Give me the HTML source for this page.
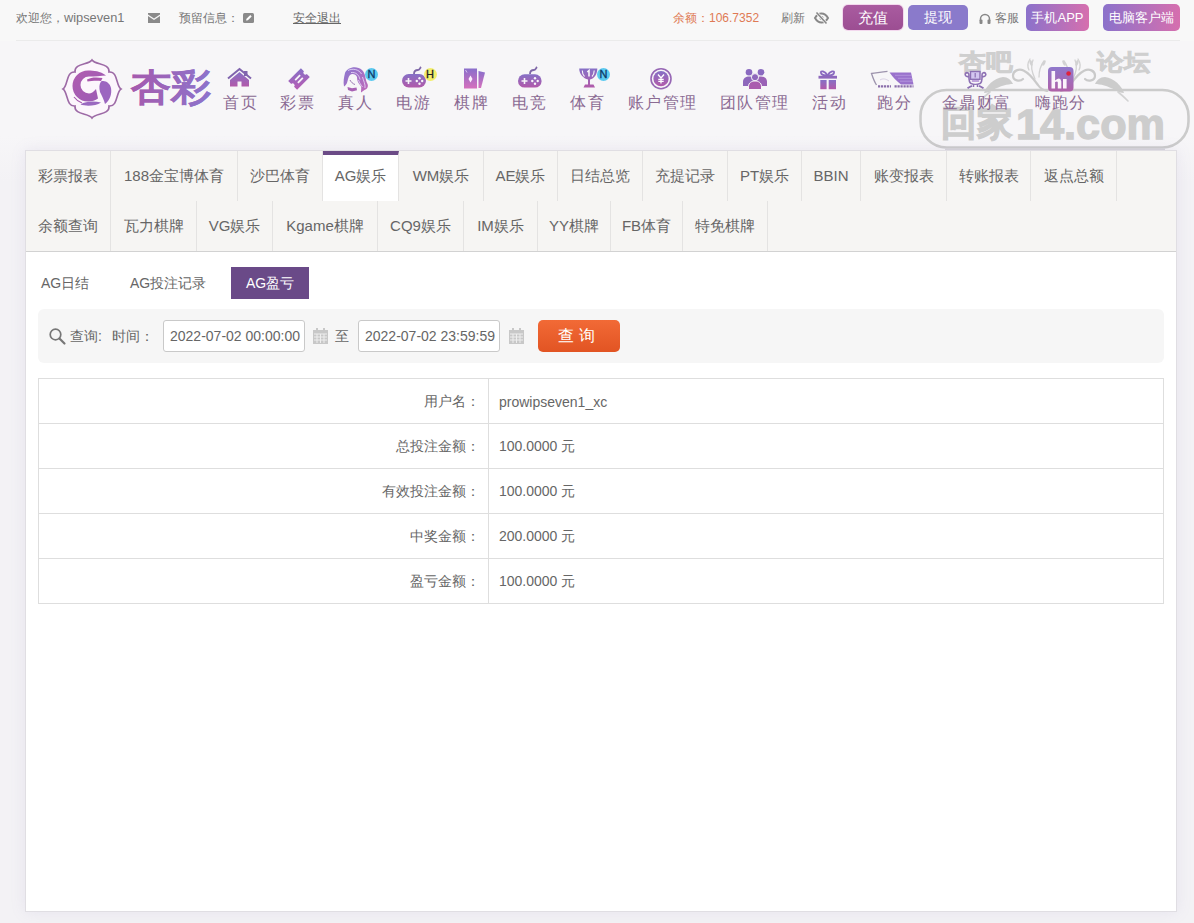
<!DOCTYPE html>
<html><head><meta charset="utf-8">
<style>
*{margin:0;padding:0;box-sizing:border-box}
html,body{width:1194px;height:923px;overflow:hidden}
body{font-family:"Liberation Sans",sans-serif;background:#f3f2f5;position:relative;color:#555}
.abs{position:absolute}
svg{position:absolute;overflow:visible}
.topbar{position:absolute;left:0;top:0;width:1194px;height:41px;background:#f8f8f8}
.topline{position:absolute;left:16px;top:40px;width:1164px;height:1px;background:#ebebeb}
.t12{position:absolute;font-size:12px;line-height:14px;white-space:nowrap;top:11px}
.btn{position:absolute;top:5px;height:25px;border-radius:5px;color:#fff;font-size:14px;line-height:25px;text-align:center;white-space:nowrap}
.nav{position:absolute;top:41px;left:0;width:1194px;height:140px;background:linear-gradient(#f7f6f8 0,#f7f6f8 95px,#f3f2f5 140px)}
.nt{position:absolute;top:93px;z-index:3;width:120px;margin-left:-60px;text-align:center;font-size:16px;letter-spacing:1.2px;padding-left:1.2px;line-height:20px;color:#8b6a93;white-space:nowrap}
.panel{position:absolute;left:25px;top:150px;width:1152px;height:762px;background:#fff;border:1px solid #e0dee3;box-shadow:0 0 14px rgba(150,130,190,.13)}
.tabs{position:absolute;left:0;top:0;width:1150px;height:101px;background:#f6f5f3;border-bottom:1px solid #d2d2d2}
.tab{position:absolute;height:50px;font-size:15px;line-height:50px;color:#666;white-space:nowrap;border-right:1px solid #e4e3e2;text-align:center}
.r1{top:0}.r2{top:50px}
.sub{position:absolute;top:116px;height:32px;font-size:14px;line-height:32px;color:#666;text-align:center;white-space:nowrap}
.query{position:absolute;left:12px;top:158px;width:1126px;height:54px;background:#f6f6f6;border-radius:6px}
.inp{position:absolute;top:11px;height:32px;width:142px;border:1px solid #c9c9c9;background:#fff;border-radius:3px;font-size:14px;line-height:30px;padding-left:6px;color:#666;white-space:nowrap;overflow:hidden}
table{position:absolute;left:12px;top:227px;width:1126px;border-collapse:collapse}
td{border:1px solid #dedede;height:45px;font-size:14px;color:#666;padding-top:2px;white-space:nowrap}
td.l{width:450px;text-align:right;padding-right:8px}
td.r{padding-left:10px}
.badge{position:absolute;z-index:3;width:13px;height:13px;border-radius:50%;font-size:11px;line-height:13px;text-align:center;font-weight:normal;-webkit-text-stroke:0.3px currentColor}
.wm{position:absolute;color:rgba(150,150,150,.45);font-weight:bold;white-space:nowrap}
</style></head><body>
<div class="topbar"></div>
<div class="topline"></div>
<div class="t12" style="left:16px;color:#777">欢迎您，<span style="font-size:12.8px">wipseven1</span></div>
<svg style="left:148px;top:13px" width="12" height="10" viewBox="0 0 12 10"><path d="M0 0H12V1.5L6 5.5L0 1.5Z M0 3L6 7L12 3V10H0Z" fill="#8a8a8a"/></svg>
<div class="t12" style="left:179px;color:#777">预留信息：</div>
<svg style="left:243px;top:13px" width="11" height="10" viewBox="0 0 11 10"><rect width="11" height="10" rx="1.5" fill="#8a8a8a"/><path d="M3 7.5L3.5 5.8L7.3 2L8.7 3.4L4.9 7.2Z" fill="#fff"/></svg>
<div class="t12" style="left:293px;color:#666;text-decoration:underline">安全退出</div>
<div class="t12" style="left:673px;color:#df7a55">余额：106.7352</div>
<div class="t12" style="left:781px;color:#777">刷新</div>
<svg style="left:814px;top:12px" width="15" height="12" viewBox="0 0 15 12"><path d="M1 6C3 2.5 5.5 1.5 7.5 1.5S12 2.5 14 6C12 9.5 9.5 10.5 7.5 10.5S3 9.5 1 6Z" fill="none" stroke="#888" stroke-width="2"/><circle cx="7.5" cy="6" r="2" fill="#888"/><path d="M2.5 0.5L12.5 11.5" stroke="#f8f8f8" stroke-width="3"/><path d="M2.5 0.5L12.5 11.5" stroke="#888" stroke-width="1.6"/></svg>
<div class="btn" style="left:843px;width:60px;background:linear-gradient(#a95ba0,#9c4e92);box-shadow:0 0 0 1px #f3d8ee;font-size:15px">充值</div>
<div class="btn" style="left:908px;width:60px;background:#8a7acb">提现</div>
<svg style="left:979px;top:13px" width="12" height="11" viewBox="0 0 12 11"><path d="M1.5 8V6A4.5 4.5 0 0 1 10.5 6V8" fill="none" stroke="#888" stroke-width="1.5"/><rect x="0.5" y="6.5" width="3" height="4.5" rx="1" fill="#888"/><rect x="8.5" y="6.5" width="3" height="4.5" rx="1" fill="#888"/></svg>
<div class="t12" style="left:995px;color:#777">客服</div>
<div class="btn" style="left:1026px;top:4px;height:27px;line-height:27px;width:63px;font-size:13px;background:linear-gradient(90deg,#8b72cb,#d66fae)">手机APP</div>
<div class="btn" style="left:1103px;top:4px;height:27px;line-height:27px;width:77px;font-size:13px;background:linear-gradient(90deg,#8b72cb,#d66fae)">电脑客户端</div>

<div class="nav"></div>
<svg style="left:0;top:0;z-index:0" width="1194" height="160" viewBox="0 0 1194 160">
<g opacity="0.9">
<text x="959" y="70" font-size="23" font-weight="bold" fill="#cbcbcb" stroke="#cbcbcb" stroke-width="0.8" style="font-family:'Liberation Sans',sans-serif" textLength="53" lengthAdjust="spacingAndGlyphs">杏吧</text>
<text x="1097" y="70" font-size="23" font-weight="bold" fill="#cbcbcb" stroke="#cbcbcb" stroke-width="0.8" style="font-family:'Liberation Sans',sans-serif" textLength="53" lengthAdjust="spacingAndGlyphs">论坛</text>
<g>
<path d="M984 93C986 86 994 78 1003 77C1008 77 1011 80 1013 84C1008 84 1000 86 993 90C990 92 987 93 984 93Z" fill="#c8c8c8"/>
<path d="M990 92C986 95 983 98 980 101" fill="none" stroke="#cfcfcf" stroke-width="1.6" stroke-linecap="round"/>
<path d="M1023 79C1020 82 1013 81 1013 75.5C1013 70.5 1019 68.5 1023.5 70.5C1029 73 1033 78 1038 85C1040 88 1043 90 1047 91" fill="none" stroke="#c6c6c6" stroke-width="2.2" stroke-linecap="round"/>
<path d="M1035 79C1032 72 1030 66 1033 60M1039 77C1039 70 1041 65 1044 61M1029 70C1027 66 1028 62 1030 59" fill="none" stroke="#cfcfcf" stroke-width="1.3" stroke-linecap="round"/>
<ellipse cx="1031" cy="63" rx="1.4" ry="3" fill="#cfcfcf" transform="rotate(-20 1031 63)"/>
<ellipse cx="1044" cy="63" rx="1.3" ry="3" fill="#cfcfcf" transform="rotate(25 1044 63)"/>
</g>
<g transform="translate(2108,0) scale(-1,1)">
<path d="M984 93C986 86 994 78 1003 77C1008 77 1011 80 1013 84C1008 84 1000 86 993 90C990 92 987 93 984 93Z" fill="#c8c8c8"/>
<path d="M990 92C986 95 983 98 980 101" fill="none" stroke="#cfcfcf" stroke-width="1.6" stroke-linecap="round"/>
<path d="M1023 79C1020 82 1013 81 1013 75.5C1013 70.5 1019 68.5 1023.5 70.5C1029 73 1033 78 1038 85C1040 88 1043 90 1047 91" fill="none" stroke="#c6c6c6" stroke-width="2.2" stroke-linecap="round"/>
<path d="M1035 79C1032 72 1030 66 1033 60M1039 77C1039 70 1041 65 1044 61M1029 70C1027 66 1028 62 1030 59" fill="none" stroke="#cfcfcf" stroke-width="1.3" stroke-linecap="round"/>
<ellipse cx="1031" cy="63" rx="1.4" ry="3" fill="#cfcfcf" transform="rotate(-20 1031 63)"/>
<ellipse cx="1044" cy="63" rx="1.3" ry="3" fill="#cfcfcf" transform="rotate(25 1044 63)"/>
</g>
</g>
<rect x="920.5" y="90" width="268" height="57.5" rx="26" fill="none" stroke="#cbcbcb" stroke-width="2.6"/>
<path d="M945 149.2H1165" stroke="#d6d4da" stroke-width="1.5"/>
<text y="138.5" font-weight="bold" fill="#cdcdcd" stroke="#cdcdcd" stroke-width="1.3" style="font-family:'Liberation Sans',sans-serif"><tspan x="941" y="135" font-size="35" textLength="71" lengthAdjust="spacingAndGlyphs">回家</tspan><tspan x="1016" y="138.5" font-size="42" textLength="149" lengthAdjust="spacingAndGlyphs">14.com</tspan></text>
</svg>
<svg style="left:0;top:0" width="1194" height="150" viewBox="0 0 1194 150"><defs>
<linearGradient id="gp" x1="0" y1="0" x2="0" y2="1"><stop offset="0" stop-color="#8670c6"/><stop offset="1" stop-color="#b25aaa"/></linearGradient>
<linearGradient id="gpd" x1="1" y1="0" x2="0" y2="1"><stop offset="0" stop-color="#8670c6"/><stop offset="1" stop-color="#b85cb4"/></linearGradient>
<linearGradient id="gcard" x1="0" y1="0" x2="0" y2="1"><stop offset="0" stop-color="#8a6fcb"/><stop offset="1" stop-color="#d570bd"/></linearGradient>
<linearGradient id="glogo" x1="0" y1="0" x2="1" y2="0"><stop offset="0" stop-color="#a65aad"/><stop offset="1" stop-color="#8c74cc"/></linearGradient>
<linearGradient id="gem" x1="0" y1="0" x2="1" y2="1"><stop offset="0" stop-color="#b15cb0"/><stop offset="1" stop-color="#9a5cb5"/></linearGradient>
<linearGradient id="ghi" x1="0" y1="0" x2="0" y2="1"><stop offset="0" stop-color="#8f78cc"/><stop offset="1" stop-color="#b060a8"/></linearGradient>
</defs>
<!-- logo emblem -->
<g transform="translate(92,89)">
<path d="M0 -29 C-3 -24 -18 -26 -17 -17 C-26 -18 -24 -3 -29 0 C-24 3 -26 18 -17 17 C-18 26 -3 24 0 29 C3 24 18 26 17 17 C26 18 24 3 29 0 C24 -3 26 -18 17 -17 C18 -26 3 -24 0 -29Z" fill="#fcf6fc" stroke="#9d6aa6" stroke-width="1.6"/>
</g>
<path d="M106 75.5C100 71 94 70.5 88 70.5A15.5 15.5 0 0 0 88 101.5C92 101.5 95.5 100.5 98 98.5L96 89C93.5 92 91 93.5 89 93.5A8.5 8.5 0 0 1 89 76.5C95 76.5 101 76 106 75.5Z" fill="url(#gem)"/>
<path d="M74 97A17.5 17.5 0 0 0 82 103" fill="none" stroke="#a65aae" stroke-width="1.2"/>
<path d="M87 79.5C91 77 97 77 102.5 78L101 81C96 80.5 91 81 87.5 81.5Z" fill="#a957ad"/>
<path d="M101 81.5C105 80 110 83 111 88C112 94 110 100 105 104C104 100 102 96 100 92C99 88 99 84 101 81.5Z" fill="#9c66c0"/>
<path d="M80.5 104.5C86 101 94 101 101 102.5C96 106 86 106.5 80.5 104.5Z" fill="#9a68c0"/>
<text x="131" y="99.5" font-size="37" font-weight="bold" fill="url(#glogo)" stroke="url(#glogo)" stroke-width="0.3" style="font-family:'Liberation Sans',sans-serif" textLength="80" lengthAdjust="spacingAndGlyphs">杏彩</text>
<!-- house -->
<path d="M228 78.5L239.5 69L251 78.5" fill="none" stroke="#8064ae" stroke-width="2"/>
<rect x="244" y="71" width="3.5" height="5" fill="#8064ae"/>
<path d="M230 80L239.5 72L249 80V86.5H241.5V81.5H237.5V86.5H230Z" fill="url(#gp)"/>
<!-- ticket -->
<g transform="translate(299,79) rotate(-45)">
<path d="M-9 -6.3H9V-2A2 2 0 0 0 9 2V6.3H-9V2A2 2 0 0 0 -9 -2Z" fill="url(#gpd)"/>
<rect x="-3.5" y="-2.8" width="7" height="1.8" fill="#f7f6f8"/><rect x="-3.5" y="1" width="7" height="1.8" fill="#f7f6f8"/>
</g>
<!-- woman -->
<linearGradient id="gw" x1="0" y1="0" x2="1" y2="1"><stop offset="0" stop-color="#8a78d0"/><stop offset="1" stop-color="#c068b8"/></linearGradient>
<path d="M345 73C347 67 357 65 362 70C366 74 365 79 367 83C369 86 367.5 89 364.5 90L361 92.5C361 89 362 87 360 85C358 83 357 80 357 77C356 74 352 73 350 75C348 77 348 80 347 83C346 85 345 86 344 86.5C343 82 344 77 345 73Z" fill="url(#gw)"/>
<path d="M348 70.5C353 68 359 69.5 361.5 74M351 72.5C356 72 359 75 360 79.5M362.5 77C363.5 81 365.5 84 365 88M358.5 80C359.5 83 361 85 362.5 87" fill="none" stroke="#e2d2f6" stroke-width="0.9"/>
<path d="M350 80C351 82 353 84 355 84.5" fill="none" stroke="#8e6aa8" stroke-width="0.9"/>
<path d="M347.5 87L352 88.3L356.5 87.5L357 90.2L352 91.5L348 90Z" fill="#a862b4"/>
<!-- gamepad 1 -->
<path d="M414 74C414 71 416 70 418 70C420 70 420 68 421 67" fill="none" stroke="#7f68a8" stroke-width="1.8"/>
<rect x="402" y="74" width="24" height="13.5" rx="6.75" fill="url(#gp)"/>
<path d="M405.5 81H411.5M408.5 78V84" stroke="#f7f6f8" stroke-width="1.6"/>
<circle cx="419.5" cy="78.3" r="1.2" fill="#f7f6f8"/><circle cx="419.5" cy="83.7" r="1.2" fill="#f7f6f8"/><circle cx="416.8" cy="81" r="1.2" fill="#f7f6f8"/><circle cx="422.2" cy="81" r="1.2" fill="#f7f6f8"/>
<!-- cards -->
<path d="M478.5 71L485 72.5L481 88H478.5Z" fill="url(#gcard)"/>
<rect x="464" y="68.5" width="13" height="20" fill="url(#gcard)"/>
<path d="M470.5 75.5L472.5 79L470.5 82.5L468.5 79Z" fill="#fbeefc"/>
<path d="M465.5 70L467 72.5" stroke="#e8d8f5" stroke-width="0.8"/>
<!-- gamepad 2 -->
<path d="M530 74C530 71 532 70 534 70C536 70 536 68 537 67" fill="none" stroke="#7f68a8" stroke-width="1.8"/>
<rect x="518" y="74.3" width="23.6" height="13.3" rx="6.6" fill="url(#gp)"/>
<path d="M521.5 81H527.5M524.5 78V84" stroke="#f7f6f8" stroke-width="1.6"/>
<circle cx="535" cy="78.3" r="1.2" fill="#f7f6f8"/><circle cx="535" cy="83.7" r="1.2" fill="#f7f6f8"/><circle cx="532.3" cy="81" r="1.2" fill="#f7f6f8"/><circle cx="537.7" cy="81" r="1.2" fill="#f7f6f8"/>
<!-- trophy -->
<path d="M579.2 68.5H597.3C597.3 74 594.5 78.5 590 79.5V84.5H593.5L595 87.5H583.5L585 84.5H588V79.5C583.5 78.5 579.2 74 579.2 68.5Z" fill="url(#gp)"/>
<path d="M582.3 70.5C582.3 73 583 75 584.5 76.5M594.2 70.5C594.2 73 593.5 75 592 76.5" stroke="#f7f6f8" stroke-width="1.1" fill="none"/>
<path d="M587.3 72L589 70.5V76.5" stroke="#f7f6f8" stroke-width="1.6" fill="none"/>
<!-- coin -->
<circle cx="661" cy="78.7" r="10" fill="none" stroke="#9767b5" stroke-width="1.6"/>
<circle cx="661" cy="78.7" r="7.6" fill="url(#gp)"/>
<path d="M658 74.5L661 78L664 74.5M661 78V83.5M658.3 79.3H663.7M658.3 81.3H663.7" stroke="#fff" stroke-width="1.3" fill="none"/>
<!-- team -->
<circle cx="749" cy="72.2" r="3.3" fill="#8a6ac0"/><circle cx="761" cy="72.2" r="3.3" fill="#8a6ac0"/>
<path d="M743 86V82C743 78 746 76.5 749 76.5C752 76.5 755 78 755 82V86Z" fill="#8e68bc"/>
<path d="M755 86V82C755 78 758 76.5 761 76.5C764 76.5 767 78 767 82V86Z" fill="#9a62b6"/>
<circle cx="755" cy="77.2" r="3.6" fill="#8f68bc" stroke="#f7f6f8" stroke-width="1"/>
<path d="M748.5 89.5V86.5C748.5 82.5 752 81 755 81C758 81 761.5 82.5 761.5 86.5V89.5Z" fill="#aa5cae" stroke="#f7f6f8" stroke-width="1"/>
<!-- gift -->
<path d="M827.5 75.5C825 71 820 70 821 73C821.5 75 824 75.5 827.5 75.5C831 75.5 833.5 75 834 73C835 70 830 71 827.5 75.5" fill="none" stroke="#8a6ac0" stroke-width="1.8"/>
<rect x="818.5" y="75.8" width="18.5" height="2.8" fill="#8e68bc"/>
<rect x="820.3" y="80" width="6.3" height="9.2" fill="url(#gp)"/><rect x="828.7" y="80" width="7.3" height="9.2" fill="url(#gp)"/>
<!-- horse -->
<path d="M889.5 72.6H911L913.5 84.5H901C897 81.5 893 77.5 889.5 72.6Z" fill="#9a72cc"/>
<path d="M895 75.3H911.5M898 78.3H912.2M900 81.2H913" stroke="#c2aae8" stroke-width="0.6"/>
<path d="M887.5 71.3C881 72 876 73 871.5 73.5C873 78 874.5 82 876.5 85" fill="none" stroke="#9d94ad" stroke-width="1.3"/>
<path d="M880 80C883 78 886 79 889 81" fill="none" stroke="#d8d0e4" stroke-width="1"/>
<path d="M878 86.3H891M894.5 86.3H913.5" stroke="#8a6eaa" stroke-width="2.2" stroke-dasharray="2.2 0.8"/>
<!-- ding -->
<rect x="970.5" y="71.5" width="9.5" height="7.8" fill="#d4c6f0" stroke="#8d70b4" stroke-width="1.4"/>
<path d="M975.2 73V77.5" stroke="#8d70b4" stroke-width="1.2"/>
<path d="M968.5 76.5C966 77 964.5 75 965.5 73.5C966.5 72 969 72.5 969 75C969 79 968.5 82 971 83.5C973 84.5 977.5 84.5 980 83.5C982.5 82 982 79 982 75C982 72.5 984.5 72 985.5 73.5C986.5 75 985 77 982.5 76.5" fill="none" stroke="#8d70b4" stroke-width="1.6"/>
<path d="M971.8 81H979.2" stroke="#c0a4dc" stroke-width="2"/>
<path d="M973.5 84V87M977.5 84V87" stroke="#8d70b4" stroke-width="1.5"/>
<path d="M972 85.8C970 86.6 968.5 87.5 967.5 88.2M979 85.8C981 86.6 982.5 87.5 983.5 88.2" stroke="#8d70b4" stroke-width="1.8" fill="none"/>
<!-- hi -->
<rect x="1048" y="67" width="25.5" height="24.5" rx="4" fill="url(#ghi)"/>
<rect x="1051.5" y="71" width="3.6" height="17.5" fill="#fbf4fb"/>
<path d="M1055 80.5Q1060.5 76 1061.3 81.5V88.5H1057.8V82.3Q1057.5 80.8 1055 82Z" fill="#fbf4fb"/>
<rect x="1063" y="79" width="3.6" height="9.5" fill="#fbf4fb"/>
<circle cx="1068.6" cy="73.5" r="2.3" fill="#e0223c"/>
</svg>
<div class="nt" style="left:240px">首页</div>
<div class="nt" style="left:297px">彩票</div>
<div class="nt" style="left:355px">真人</div>
<div class="nt" style="left:413px">电游</div>
<div class="nt" style="left:471px">棋牌</div>
<div class="nt" style="left:529px">电竞</div>
<div class="nt" style="left:587px">体育</div>
<div class="nt" style="left:662px">账户管理</div>
<div class="nt" style="left:754px">团队管理</div>
<div class="nt" style="left:829px">活动</div>
<div class="nt" style="left:894px">跑分</div>
<div class="nt" style="left:976px">金鼎财富</div>
<div class="nt" style="left:1060px">嗨跑分</div>
<div class="badge" style="left:365px;top:68px;background:#5ccaf0;color:#0c3868">N</div>
<div class="badge" style="left:423.5px;top:67.5px;background:#f3ef6c;color:#222">H</div>
<div class="badge" style="left:597px;top:68px;background:#5ccaf0;color:#0c3868">N</div>
<div class="panel">
 <div class="tabs">
  <div class="tab r1" style="left:0;width:85px">彩票报表</div>
  <div class="tab r1" style="left:85px;width:127px">188金宝博体育</div>
  <div class="tab r1" style="left:212px;width:85px">沙巴体育</div>
  <div class="tab r1" style="left:297px;width:76px;background:#fff;border-top:4px solid #6b4b86;line-height:42px">AG娱乐</div>
  <div class="tab r1" style="left:373px;width:85px">WM娱乐</div>
  <div class="tab r1" style="left:458px;width:74px">AE娱乐</div>
  <div class="tab r1" style="left:532px;width:85px">日结总览</div>
  <div class="tab r1" style="left:617px;width:85px">充提记录</div>
  <div class="tab r1" style="left:702px;width:74px">PT娱乐</div>
  <div class="tab r1" style="left:776px;width:59px">BBIN</div>
  <div class="tab r1" style="left:835px;width:86px">账变报表</div>
  <div class="tab r1" style="left:921px;width:84px">转账报表</div>
  <div class="tab r1" style="left:1005px;width:86px">返点总额</div>
  <div class="tab r2" style="left:0;width:85px">余额查询</div>
  <div class="tab r2" style="left:85px;width:86px">瓦力棋牌</div>
  <div class="tab r2" style="left:171px;width:76px">VG娱乐</div>
  <div class="tab r2" style="left:247px;width:105px">Kgame棋牌</div>
  <div class="tab r2" style="left:352px;width:86px">CQ9娱乐</div>
  <div class="tab r2" style="left:438px;width:74px">IM娱乐</div>
  <div class="tab r2" style="left:512px;width:73px">YY棋牌</div>
  <div class="tab r2" style="left:585px;width:72px">FB体育</div>
  <div class="tab r2" style="left:657px;width:85px">特免棋牌</div>
 </div>
 <div class="sub" style="left:14px;width:50px">AG日结</div>
 <div class="sub" style="left:103px;width:78px">AG投注记录</div>
 <div class="sub" style="left:205px;width:78px;top:116px;height:32px;background:#6a4a88;color:#fff">AG盈亏</div>
 <div class="query">
  <svg style="left:11px;top:19px" width="17" height="17" viewBox="0 0 17 17"><circle cx="6.5" cy="6.5" r="5.3" fill="none" stroke="#777" stroke-width="1.7"/><path d="M10.5 10.5L15.5 15.5" stroke="#777" stroke-width="2.2" stroke-linecap="round"/></svg>
  <div class="abs" style="left:32px;top:18px;font-size:14px;line-height:18px;color:#666;white-space:nowrap">查询:</div>
  <div class="abs" style="left:74px;top:18px;font-size:14px;line-height:18px;color:#666;white-space:nowrap">时间：</div>
  <div class="inp" style="left:125px">2022-07-02 00:00:00</div>
  <svg style="left:275px;top:19px" width="15" height="16" viewBox="0 0 15 16"><rect x="0" y="2" width="15" height="14" fill="#c8c8c8"/><rect x="3" y="0" width="2" height="4" fill="#c8c8c8"/><rect x="10" y="0" width="2" height="4" fill="#c8c8c8"/><path d="M1 6H14M1 9H14M1 12H14M4 6V15M7.5 6V15M11 6V15" stroke="#eee" stroke-width="1"/></svg>
  <div class="abs" style="left:297px;top:18px;font-size:14px;line-height:18px;color:#666">至</div>
  <div class="inp" style="left:320px">2022-07-02 23:59:59</div>
  <svg style="left:471px;top:19px" width="15" height="16" viewBox="0 0 15 16"><rect x="0" y="2" width="15" height="14" fill="#c8c8c8"/><rect x="3" y="0" width="2" height="4" fill="#c8c8c8"/><rect x="10" y="0" width="2" height="4" fill="#c8c8c8"/><path d="M1 6H14M1 9H14M1 12H14M4 6V15M7.5 6V15M11 6V15" stroke="#eee" stroke-width="1"/></svg>
  <div class="abs" style="left:500px;top:11px;width:82px;height:32px;border-radius:5px;background:linear-gradient(#f26a36,#e25423);color:#fff;font-size:16px;line-height:32px;text-align:center;letter-spacing:5px;padding-left:0">查询</div>
 </div>
 <table>
  <tr><td class="l">用户名：</td><td class="r">prowipseven1_xc</td></tr>
  <tr><td class="l">总投注金额：</td><td class="r">100.0000 元</td></tr>
  <tr><td class="l">有效投注金额：</td><td class="r">100.0000 元</td></tr>
  <tr><td class="l">中奖金额：</td><td class="r">200.0000 元</td></tr>
  <tr><td class="l">盈亏金额：</td><td class="r">100.0000 元</td></tr>
 </table>
</div>
</body></html>
